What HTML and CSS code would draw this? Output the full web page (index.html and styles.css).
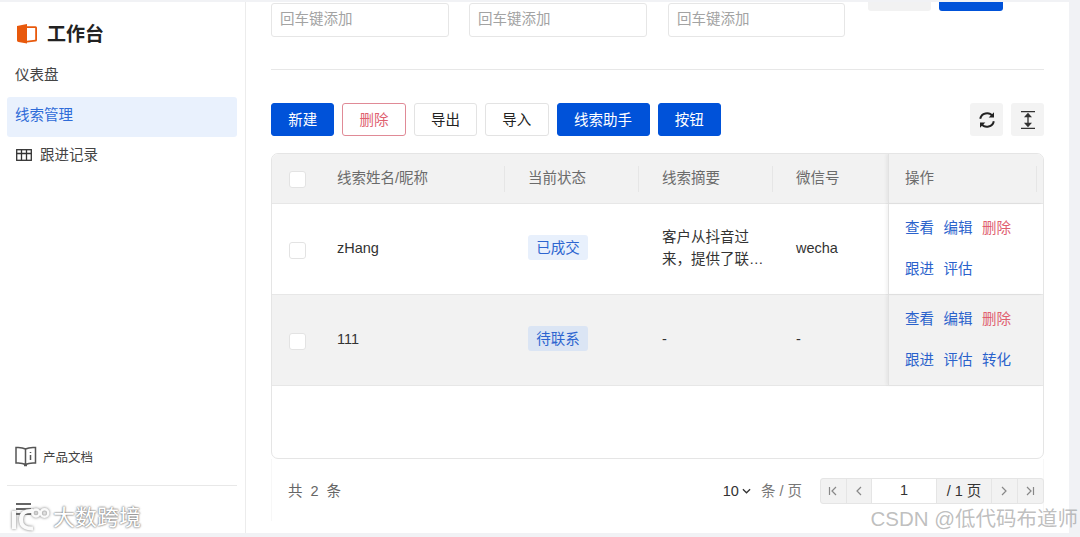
FILE: index.html
```html
<!DOCTYPE html>
<html lang="zh-CN">
<head>
<meta charset="utf-8">
<title>工作台</title>
<link rel="stylesheet" href="styles.css">
</head>
<body>
<div class="shell">
  <aside class="sidebar">
    <div class="brand">
      <svg class="brand-icon" viewBox="0 0 20 20" width="20" height="20"><path d="M0 2 10 0v19.500L1.500 18Q0 17.800 0 16.500z" fill="#e8590c"/><path d="M10 2.300h8.500Q20 2.300 20 3.800v12.200q0 1.500-1.500 1.600L10 18.500v-1.800l8.200-.9V4.100H10z" fill="#e8590c"/></svg>
      <span class="brand-name">工作台</span>
    </div>
    <nav class="nav">
      <a class="nav-item">仪表盘</a>
      <a class="nav-item nav-active">线索管理</a>
      <a class="nav-item nav-icon">
        <svg class="nav-glyph" viewBox="0 0 16 12" width="16" height="12" fill="none" stroke="#333" stroke-width="1.300"><rect x=".7" y=".7" width="14.600" height="10.600"/><path d="M.7 4.500h14.600M5.500.7v10.600M10.500.7v10.600"/></svg>
        <span>跟进记录</span>
      </a>
    </nav>
    <div class="side-foot">
      <a class="doc-link">
        <svg viewBox="0 0 22 21" width="22" height="21" fill="none" stroke="#555" stroke-width="1.500"><path d="M10.500 3Q7 1 1 1.500v15.500q6-.5 9.500 1.500 3.500-2 10-1.500V1.500Q14 1 10.500 3zM10.500 3v15.500"/><path d="M15.500 6v1M15.500 9v5"/><path d="M9 19.500h3"/></svg>
        <span>产品文档</span>
      </a>
      <div class="side-rule"></div>
      <svg class="menu-icon" viewBox="0 0 16 12" width="16" height="12" fill="none" stroke="#333" stroke-width="1.300"><path d="M0 1h15M0 6h15M0 11h15"/></svg>
    </div>
  </aside>

  <main class="main">
    <div class="filters">
      <div class="filter-input">回车键添加</div>
      <div class="filter-input">回车键添加</div>
      <div class="filter-input">回车键添加</div>
      <div class="filter-actions">
        <span class="clipped clipped-grey"></span>
        <span class="clipped clipped-blue"></span>
      </div>
    </div>
    <div class="rule"></div>
    <div class="toolbar">
      <button class="btn btn-primary">新建</button>
      <button class="btn btn-danger">删除</button>
      <button class="btn">导出</button>
      <button class="btn">导入</button>
      <button class="btn btn-primary btn-wide">线索助手</button>
      <button class="btn btn-primary">按钮</button>
      <span class="toolbar-gap"></span>
      <button class="icon-btn" aria-label="刷新">
        <svg viewBox="0 0 18 18" width="18" height="18" fill="none" stroke="#222" stroke-width="2"><path d="M2.200 7.800A6.900 6.900 0 0 1 14.500 5"/><path d="M15.800 10.200A6.900 6.900 0 0 1 3.500 13"/><path d="M16 1.200v5.300h-5.300z" fill="#222" stroke="none"/><path d="M2 16.800v-5.300h5.300z" fill="#222" stroke="none"/></svg>
      </button>
      <button class="icon-btn" aria-label="行高">
        <svg viewBox="0 0 14 18" width="14" height="18" fill="none" stroke="#333" stroke-width="1.300"><path d="M0 .7h14M0 17.300h14M7 3v12"/><path d="M4.500 5.500 7 2.800l2.500 2.700zM4.500 12.500 7 15.200l2.500-2.700z" fill="#333"/></svg>
      </button>
    </div>

    <div class="table">
      <div class="tr thead">
        <div class="td"><span class="check"></span></div>
        <div class="td th">线索姓名/昵称</div>
        <div class="td th">当前状态</div>
        <div class="td th">线索摘要</div>
        <div class="td th">微信号</div>
        <div class="td th td-fixed">操作</div>
      </div>
      <div class="tr">
        <div class="td"><span class="check"></span></div>
        <div class="td">zHang</div>
        <div class="td"><span class="tag">已成交</span></div>
        <div class="td"><span class="summary">客户从抖音过来，提供了联…</span></div>
        <div class="td">wecha</div>
        <div class="td td-fixed">
          <div class="ops"><a class="op">查看</a><a class="op">编辑</a><a class="op op-del">删除</a><a class="op">跟进</a><a class="op">评估</a></div>
        </div>
      </div>
      <div class="tr tr-alt">
        <div class="td"><span class="check"></span></div>
        <div class="td">111</div>
        <div class="td"><span class="tag tag-alt">待联系</span></div>
        <div class="td">-</div>
        <div class="td">-</div>
        <div class="td td-fixed">
          <div class="ops"><a class="op">查看</a><a class="op">编辑</a><a class="op op-del">删除</a><a class="op">跟进</a><a class="op">评估</a><a class="op">转化</a></div>
        </div>
      </div>
    </div>

    <div class="pagination">
      <span class="total">共 2 条</span>
      <span class="page-size">10<svg viewBox="0 0 10 6" width="9" height="6" fill="none" stroke="#333" stroke-width="1.400"><path d="M1 1l4 4 4-4"/></svg></span>
      <span class="page-unit">条 / 页</span>
      <div class="pager">
        <span class="pg"><svg viewBox="0 0 10 10" width="10" height="10" fill="none" stroke="#888" stroke-width="1.200"><path d="M1.500 1v8M8 1 4 5l4 4"/></svg></span>
        <span class="pg"><svg viewBox="0 0 10 10" width="10" height="10" fill="none" stroke="#888" stroke-width="1.200"><path d="M7 1 3 5l4 4"/></svg></span>
        <span class="pg-input">1</span>
        <span class="pg-text">/ 1 页</span>
        <span class="pg"><svg viewBox="0 0 10 10" width="10" height="10" fill="none" stroke="#888" stroke-width="1.200"><path d="M3 1l4 4-4 4"/></svg></span>
        <span class="pg"><svg viewBox="0 0 10 10" width="10" height="10" fill="none" stroke="#888" stroke-width="1.200"><path d="M8.500 1v8M2 1l4 4-4 4"/></svg></span>
      </div>
    </div>
  </main>
</div>

<div class="wm-left">
  <svg viewBox="0 0 40 26" width="40" height="26" fill="none" stroke="#fafafa" stroke-width="4"><path d="M4 6v18M23 6Q11 5 11 14.500t12 9"/><circle cx="26" cy="8" r="3.500" stroke-width="2.400"/><circle cx="34.500" cy="8" r="3.800" stroke-width="2.400"/></svg>
  <span>大数跨境</span>
</div>
<div class="wm-right">CSDN @低代码布道师</div>
</body>
</html>
```

FILE: styles.css
```css
* { box-sizing: border-box; }
html, body { margin: 0; height: 100%; }
body {
  background: #f1f2f5;
  font-family: "Liberation Sans", "Noto Sans CJK SC", sans-serif;
  font-size: 14.500px;
  color: #333;
  overflow: hidden;
  position: relative;
}
.shell {
  display: flex;
  height: 531px;
  margin: 2px 11px 0 0;
  background: #fff;
}

/* Sidebar */
.sidebar {
  width: 246px;
  flex: none;
  border-right: 1px solid #ececec;
  padding: 0 8px 0 7px;
  display: flex;
  flex-direction: column;
}
.brand { display: flex; align-items: center; gap: 10px; padding: 9px 0 0 10px; height: 54px; }
.brand-name { font-size: 19px; font-weight: 700; color: #222; padding-bottom: 3px; }
.nav { display: flex; flex-direction: column; }
.nav-item { height: 40px; display: flex; align-items: center; padding: 0 0 8px 8px; border-radius: 3px; color: #444; }
.nav-item:first-child { margin-bottom: 1px; padding-bottom: 6px; }
.nav-active { background: #e9f1fd; color: #2e6bd8; }
.nav-icon { gap: 8px; padding-left: 9px; }
.nav-glyph { margin-top: 4px; }
.side-foot { margin-top: auto; display: flex; flex-direction: column; }
.doc-link { display: flex; align-items: center; gap: 6px; padding-left: 8px; font-size: 12.500px; color: #444; }
.side-rule { height: 1px; background: #e8e8e8; margin-top: 18px; }
.menu-icon { margin: 17px 0 18px 9px; }

/* Main */
.main { flex: 1; min-width: 0; padding: 0 25px; display: flex; flex-direction: column; }
.filters { display: flex; align-items: flex-start; gap: 20px; height: 67px; }
.filter-input {
  width: 178px; height: 33.500px; margin-top: 1px; padding: 0 0 4px 8px;
  border: 1px solid #e6e6e6; border-radius: 3px;
  display: flex; align-items: center; color: #a3a3a3;
}
.filter-input:nth-child(3) { margin-left: 1px; width: 177px; }
.filter-actions { display: flex; gap: 8px; margin-left: 3px; }
.clipped { display: block; width: 63px; height: 8.500px; border-radius: 0 0 3px 3px; }
.clipped-grey { background: #f2f2f2; }
.clipped-blue { background: #0052d9; width: 64px; }
.rule { height: 1px; background: #e7e7e7; flex: none; }
.toolbar { display: flex; gap: 8px; margin-top: 33px; height: 33px; flex: none; }
.btn {
  width: 63.400px; height: 33px; padding: 0 0 2px;
  font: inherit; color: #222; background: #fff;
  border: 1px solid #e3e3e3; border-radius: 3px;
}
.btn-primary { background: #0052d9; border-color: #0052d9; color: #fff; }
.btn-danger { border-color: #e08a96; color: #e0606f; }
.btn-wide { width: 93px; }
.toolbar-gap { flex: 1; }
.icon-btn {
  width: 33px; height: 33px; padding: 0; border: 0; border-radius: 3px; background: #f3f3f3;
  display: flex; align-items: center; justify-content: center;
}

/* Table */
.table {
  margin-top: 17px; height: 305.500px; flex: none;
  border: 1px solid #e5e5e5; border-radius: 7px; overflow: hidden;
}
.tr {
  display: grid;
  grid-template-columns: 49px 191px 134px 134px 108px 155px;
  height: 91px;
  border-bottom: 1px solid #e7e7e7;
}
.tr-alt { background: #f2f2f2; }
.thead { height: 49.500px; background: #f2f2f2; }
.td { padding: 0 16px 2px; display: flex; align-items: center; min-width: 0; position: relative; }
.td:first-child { padding: 3px 0 0 17px; }
.thead .td:first-child { padding-top: 2px; }
.th { color: #6b6b6b; padding-bottom: 3px; }
.thead .th::after {
  content: ""; position: absolute; right: 7px; top: 12px; bottom: 11px; width: 1px; background: #e6e6e6;
}
.thead .th:nth-child(5)::after { display: none; }
.thead .th:last-child::after { right: 6px; }
.td-fixed { border-left: 1px solid #e2e2e2; box-shadow: -2px 0 3px rgba(0, 0, 0, .05); }
.tr:not(.thead) .td-fixed { padding-bottom: 0; }
.check { width: 17px; height: 17px; border: 1px solid #e3e3e3; border-radius: 3px; background: #fff; }
.tag {
  width: 60px; height: 25px; padding-bottom: 3px; border-radius: 3px; background: #e8f0fc; color: #2d65d0;
  display: flex; align-items: center; justify-content: center;
}
.tag-alt { background: #dbe5f4; }
.summary { display: block; line-height: 22px; }
.ops { display: grid; grid-template-columns: repeat(3, 29px); gap: 19.500px 9.500px; line-height: 22px; }
.op { color: #2a62cc; white-space: nowrap; }
.op-del { color: #e0606f; }

/* Pagination */
.pagination { flex: 1; display: flex; align-items: flex-start; padding: 19px 0 0 16px; border-left: 1px solid #f7f7f7; border-right: 1px solid #f7f7f7; margin-bottom: 12px; }
.total { color: #666; letter-spacing: 1px; word-spacing: 2px; line-height: 26px; }
.page-size { margin-left: auto; display: flex; align-items: center; gap: 3px; line-height: 26px; }
.page-unit { margin-left: 10px; color: #777; line-height: 26px; }
.pager {
  display: flex; height: 26px; margin-left: 18px; margin-right: -1px;
  border: 1px solid #e5e5e5; border-radius: 3px; background: #f2f2f2;
}
.pg { width: 25.500px; display: flex; align-items: center; justify-content: center; border-right: 1px solid #e5e5e5; }
.pg:last-child { border-right: 0; }
.pg-input { width: 65px; padding-bottom: 1px; background: #fff; display: flex; align-items: center; justify-content: center; color: #333; border-right: 1px solid #e5e5e5; }
.pg-text { width: 55px; padding-bottom: 3px; display: flex; align-items: center; justify-content: center; border-right: 1px solid #e5e5e5; }

/* Watermarks laid over the picture */
.wm-left {
  position: absolute; left: 10px; top: 505px;
  display: flex; align-items: center; gap: 3px;
  font-size: 22px; line-height: 26px; color: #fff;
  text-shadow: 0 0 2px #777, 0 0 2px #777;
}
.wm-left svg { filter: drop-shadow(0 0 1.500px #777); }
.wm-right {
  position: absolute; right: 2px; top: 506px;
  font-size: 20.500px; line-height: 26px; color: rgba(150, 150, 150, .62);
  white-space: nowrap;
}
```
